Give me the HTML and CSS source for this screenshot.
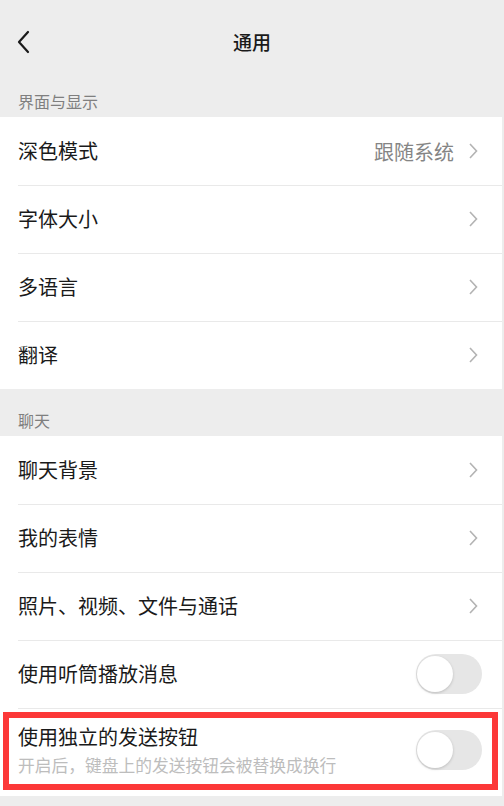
FILE: index.html
```html
<!DOCTYPE html>
<html lang="zh-CN">

<head>
    <meta charset="UTF-8">
    <meta name="viewport" content="width=device-width, initial-scale=1.0">
    <title>通用</title>
    <link rel="stylesheet" href="styles.css">
</head>

<body>
    <header class="topbar">
        <svg class="back" width="14" height="24" viewBox="0 0 14 24">
            <path d="M11 2 L2 12 L11 22" fill="none" stroke="#1a1a1a" stroke-width="2.2" stroke-linecap="round" stroke-linejoin="round" />
        </svg>
        <h1>通用</h1>
    </header>

    <p class="section">界面与显示</p>
    <ul class="group">
        <li class="row">
            <span class="label">深色模式</span>
            <span class="value">跟随系统</span>
            <svg class="arrow" width="10" height="18" viewBox="0 0 10 18"><path d="M2 2 L8.5 9 L2 16" fill="none" stroke="#b3b3b3" stroke-width="1.6" /></svg>
        </li>
        <li class="row">
            <span class="label">字体大小</span>
            <svg class="arrow" width="10" height="18" viewBox="0 0 10 18"><path d="M2 2 L8.5 9 L2 16" fill="none" stroke="#b3b3b3" stroke-width="1.6" /></svg>
        </li>
        <li class="row">
            <span class="label">多语言</span>
            <svg class="arrow" width="10" height="18" viewBox="0 0 10 18"><path d="M2 2 L8.5 9 L2 16" fill="none" stroke="#b3b3b3" stroke-width="1.6" /></svg>
        </li>
        <li class="row">
            <span class="label">翻译</span>
            <svg class="arrow" width="10" height="18" viewBox="0 0 10 18"><path d="M2 2 L8.5 9 L2 16" fill="none" stroke="#b3b3b3" stroke-width="1.6" /></svg>
        </li>
    </ul>

    <p class="section section-chat">聊天</p>
    <ul class="group">
        <li class="row">
            <span class="label">聊天背景</span>
            <svg class="arrow" width="10" height="18" viewBox="0 0 10 18"><path d="M2 2 L8.5 9 L2 16" fill="none" stroke="#b3b3b3" stroke-width="1.6" /></svg>
        </li>
        <li class="row">
            <span class="label">我的表情</span>
            <svg class="arrow" width="10" height="18" viewBox="0 0 10 18"><path d="M2 2 L8.5 9 L2 16" fill="none" stroke="#b3b3b3" stroke-width="1.6" /></svg>
        </li>
        <li class="row">
            <span class="label">照片、视频、文件与通话</span>
            <svg class="arrow" width="10" height="18" viewBox="0 0 10 18"><path d="M2 2 L8.5 9 L2 16" fill="none" stroke="#b3b3b3" stroke-width="1.6" /></svg>
        </li>
        <li class="row">
            <span class="label">使用听筒播放消息</span>
            <span class="switch"><span class="knob"></span></span>
        </li>
        <li class="row row-tall">
            <div class="texts">
                <span class="label">使用独立的发送按钮</span>
                <span class="hint">开启后，键盘上的发送按钮会被替换成换行</span>
            </div>
            <span class="switch"><span class="knob"></span></span>
            <div class="mark"></div>
        </li>
    </ul>
</body>

</html>
```

FILE: styles.css
```css
* {
    box-sizing: border-box;
    margin: 0;
    padding: 0;
}

body {
    background-color: #ededed;
    font-family: "Noto Sans CJK SC", "Noto Sans", sans-serif;
    color: #1a1a1a;
    height: 806px;
    overflow: hidden;
}

.topbar {
    height: 84px;
    display: flex;
    align-items: center;
    justify-content: center;
    position: relative;
}

.topbar h1 {
    font-size: 19px;
    font-weight: 500;
    margin-top: -1px;
}

.back {
    position: absolute;
    left: 17px;
    top: 30px;
}

.section {
    height: 33px;
    display: flex;
    align-items: flex-end;
    padding: 0 0 5px 18px;
    font-size: 16px;
    line-height: 22px;
    color: #7f7f7f;
}

.section-chat {
    height: 47px;
}

.group {
    list-style-type: none;
    background-color: #fff;
    margin-right: 2px;
}

.row {
    height: 68px;
    display: flex;
    align-items: center;
    padding: 0 24px 0 18px;
    position: relative;
}

.row + .row::before {
    content: "";
    position: absolute;
    top: 0;
    left: 18px;
    right: 0;
    height: 1px;
    background-color: #e9e9e9;
}

.label {
    font-size: 20px;
    line-height: 28px;
    flex: 1;
}

.value {
    font-size: 20px;
    color: #858585;
    margin-right: 14px;
}

.arrow {
    display: block;
}

.switch {
    width: 66px;
    height: 40px;
    border-radius: 20px;
    background-color: #e6e6e6;
    position: relative;
    margin-right: -4px;
    flex-shrink: 0;
}

.knob {
    position: absolute;
    left: 1px;
    top: 2px;
    width: 36px;
    height: 36px;
    border-radius: 50%;
    background-color: #fff;
    box-shadow: 0 1px 3px rgba(0, 0, 0, 0.18);
}

.row-tall {
    height: 88px;
    padding-bottom: 4px;
}

.texts {
    flex: 1;
    display: flex;
    flex-direction: column;
}

.hint {
    font-size: 16.75px;
    line-height: 24px;
    color: #bdbdbd;
    margin-top: 2px;
}

.mark {
    position: absolute;
    left: 3px;
    top: 4px;
    width: 495px;
    height: 78px;
    border: 6px solid #fc3838;
}
```
